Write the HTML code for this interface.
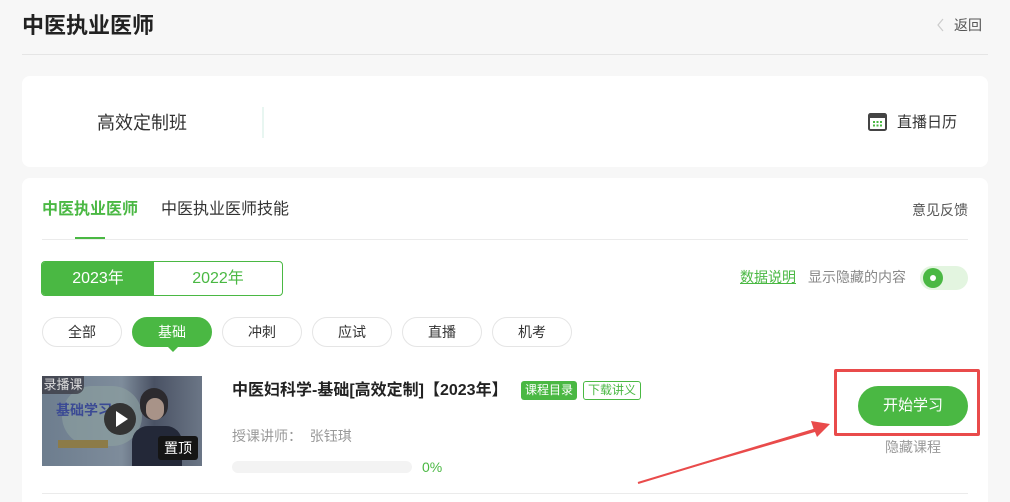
<!DOCTYPE html>
<html><head><meta charset="utf-8"><style>
*{margin:0;padding:0;box-sizing:border-box}
html,body{width:1010px;height:502px;overflow:hidden}
body{background:#f7f7f7;font-family:"Liberation Sans","Noto Sans CJK SC",sans-serif;color:#333;position:relative}
.a{position:absolute;white-space:nowrap}
.card{position:absolute;background:#fff;border-radius:8px}
.chip{position:absolute;top:317px;width:80px;height:30px;border:1px solid #e5e5e5;border-radius:15px;text-align:center;line-height:28px;font-size:14px;color:#333;background:#fff}
</style></head><body>
<div class="a" style="left:22px;top:11px;font-size:22px;font-weight:bold;color:#222;line-height:30px">中医执业医师</div>
<svg class="a" style="left:936px;top:18px" width="10" height="14"><path d="M7 1 L2 7 L7 13" fill="none" stroke="#ccc" stroke-width="1.2"/></svg>
<div class="a" style="left:954px;top:15px;font-size:14px;color:#555;line-height:20px">返回</div>
<div class="a" style="left:22px;top:54px;width:966px;height:1px;background:#e5e5e5"></div>

<div class="card" style="left:22px;top:76px;width:966px;height:91px"></div>
<div class="a" style="left:97px;top:111px;font-size:18px;line-height:24px;color:#333">高效定制班</div>
<div class="a" style="left:262px;top:107px;width:2px;height:31px;background:#e8f6f1"></div>
<svg class="a" style="left:868px;top:113px" width="20" height="19" viewBox="0 0 20 19"><rect x="1" y="1" width="17" height="16" rx="1.5" fill="none" stroke="#444" stroke-width="2"/><rect x="1" y="1" width="17" height="4" fill="#444"/><g fill="#4ab843"><rect x="5" y="8" width="2" height="2"/><rect x="8.5" y="8" width="2" height="2"/><rect x="12" y="8" width="2" height="2"/><rect x="5" y="11.5" width="2" height="2"/><rect x="8.5" y="11.5" width="2" height="2"/><rect x="12" y="11.5" width="2" height="2"/></g></svg>
<div class="a" style="left:897px;top:112px;font-size:15px;line-height:21px;color:#333">直播日历</div>

<div class="card" style="left:22px;top:178px;width:966px;height:340px"></div>
<div class="a" style="left:42px;top:199px;font-size:16px;line-height:22px;color:#4ab843;font-weight:bold">中医执业医师</div>
<div class="a" style="left:161px;top:199px;font-size:16px;line-height:22px;color:#333">中医执业医师技能</div>
<div class="a" style="left:912px;top:200px;font-size:14px;line-height:20px;color:#555">意见反馈</div>
<div class="a" style="left:42px;top:239px;width:926px;height:1px;background:#ebebeb"></div>
<div class="a" style="left:75px;top:237px;width:30px;height:2px;background:#4ab843"></div>

<div class="a" style="left:41px;top:261px;width:242px;height:35px;border:1px solid #4ab843;border-radius:4px;overflow:hidden;background:#fff">
<div style="position:absolute;left:0;top:0;width:112px;height:35px;background:#4ab843;color:#fff;font-size:16px;text-align:center;line-height:33px">2023年</div>
<div style="position:absolute;left:112px;top:0;width:128px;height:35px;color:#4ab843;font-size:16px;text-align:center;line-height:33px">2022年</div>
</div>
<div class="a" style="left:740px;top:267px;font-size:14px;line-height:20px;color:#4ab843;text-decoration:underline">数据说明</div>
<div class="a" style="left:808px;top:267px;font-size:14px;line-height:20px;color:#888">显示隐藏的内容</div>
<div class="a" style="left:920px;top:266px;width:48px;height:24px;border-radius:12px;background:#e3f5e0"></div>
<div class="a" style="left:923px;top:268px;width:20px;height:20px;border-radius:10px;background:#4ab843"></div>
<div class="a" style="left:930px;top:275px;width:6px;height:6px;border-radius:3px;background:#fff"></div>

<div class="chip" style="left:42px">全部</div>
<div class="chip" style="left:132px;background:#4ab843;border-color:#4ab843;color:#fff">基础</div>
<div class="a" style="left:167px;top:346px;width:0;height:0;border-left:6px solid transparent;border-right:6px solid transparent;border-top:6px solid #4ab843"></div>
<div class="chip" style="left:222px">冲刺</div>
<div class="chip" style="left:312px">应试</div>
<div class="chip" style="left:402px">直播</div>
<div class="chip" style="left:492px">机考</div>

<div class="a" style="left:42px;top:376px;width:160px;height:90px;background:linear-gradient(90deg,#6d7d8e 0%,#7e8c9b 50%,#4a5264 70%,#6b7686 100%);overflow:hidden">
<div style="position:absolute;left:20px;top:10px;width:80px;height:60px;border-radius:40px;background:#8da2a0;opacity:.6"></div>
<div style="position:absolute;left:14px;top:24px;font-size:14px;font-weight:bold;color:#3b4a94">基础学习</div>
<div style="position:absolute;left:98px;top:12px;width:28px;height:32px;border-radius:14px;background:#2c2a2e"></div>
<div style="position:absolute;left:104px;top:22px;width:18px;height:22px;border-radius:9px;background:#a89388"></div>
<div style="position:absolute;left:90px;top:50px;width:50px;height:40px;border-radius:16px 16px 0 0;background:#232838"></div>
<div style="position:absolute;left:16px;top:64px;width:50px;height:8px;background:#8c7b48"></div>
<div style="position:absolute;left:0;top:0;width:42px;height:18px;background:rgba(60,60,70,.8);border-radius:0 0 8px 0;color:#ddd;font-size:13px;line-height:18px;text-align:center">录播课</div>
<div style="position:absolute;left:62px;top:27px;width:32px;height:32px;border-radius:16px;background:#333"></div>
<div style="position:absolute;left:74px;top:35px;width:0;height:0;border-top:8px solid transparent;border-bottom:8px solid transparent;border-left:12px solid #fff"></div>
<div style="position:absolute;left:116px;top:60px;width:40px;height:24px;background:#151515;border-radius:3px;color:#fff;font-size:14px;line-height:24px;text-align:center">置顶</div>
</div>

<div class="a" style="left:232px;top:380px;font-size:16px;line-height:22px;color:#222;font-weight:bold">中医妇科学-基础[高效定制]【2023年】</div>
<div class="a" style="left:521px;top:381px;width:56px;height:19px;background:#4ab843;color:#fff;border-radius:3px;font-size:12px;line-height:19px;text-align:center">课程目录</div>
<div class="a" style="left:583px;top:381px;width:58px;height:19px;border:1px solid #4ab843;color:#4ab843;border-radius:3px;font-size:12px;line-height:17px;text-align:center">下载讲义</div>
<div class="a" style="left:232px;top:426px;font-size:14px;line-height:20px;color:#999">授课讲师：&nbsp; 张钰琪</div>
<div class="a" style="left:232px;top:461px;width:180px;height:12px;border-radius:6px;background:#f3f3f3"></div>
<div class="a" style="left:422px;top:457px;font-size:14px;line-height:20px;color:#4ab843">0%</div>

<div class="a" style="left:834px;top:369px;width:146px;height:67px;border:3px solid #e94b4b;border-radius:2px"></div>
<div class="a" style="left:858px;top:386px;width:110px;height:40px;border-radius:20px;background:#4ab843;color:#fff;font-size:15px;line-height:40px;text-align:center">开始学习</div>
<div class="a" style="left:885px;top:437px;font-size:14px;line-height:20px;color:#999">隐藏课程</div>
<svg class="a" style="left:630px;top:410px" width="210" height="80"><path d="M8 73 L184 20 L181 11 L200 14 L187 27 L185 22 Z" fill="#e94b4b"/><path d="M8 73 L190 18" stroke="#e94b4b" stroke-width="2"/></svg>
<div class="a" style="left:42px;top:493px;width:926px;height:1px;background:#ebebeb"></div>
</body></html>
